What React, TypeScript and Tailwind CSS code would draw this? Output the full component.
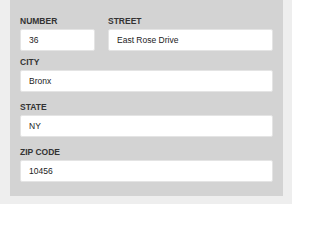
import React from "react";

interface FieldProps {
  label: string;
  value: string;
  className?: string;
}

function Field({ label, value, className = "" }: FieldProps) {
  return (
    <div className={`flex flex-col ${className}`}>
      <label className="text-[8.5px] font-bold uppercase leading-[11px] text-[#333333] mb-[2px]">
        {label}
      </label>
      <input
        readOnly
        value={value}
        className="h-[22px] w-full bg-white border border-[#e4e4e4] rounded-[2px] px-[8px] text-[8.5px] text-[#222222] outline-none"
      />
    </div>
  );
}

export default function App() {
  return (
    <div
      className="w-[292px] h-[204px] bg-[#eeeeee] pl-[10px] pr-[9px] pb-[8px]"
      style={{ fontFamily: '"Liberation Sans", Arial, sans-serif' }}
    >
      <div className="h-full bg-[#d3d3d3] px-[10px] pt-[16px] pb-[14px]">
        {/* Number + street share one row */}
        <div className="flex gap-[13px]">
          <Field label="Number" value="36" className="w-[75px] shrink-0" />
          <Field label="Street" value="East Rose Drive" className="flex-1" />
        </div>
        <Field label="City" value="Bronx" className="mt-[6px]" />
        <Field label="State" value="NY" className="mt-[10px]" />
        <Field label="Zip Code" value="10456" className="mt-[10px]" />
      </div>
    </div>
  );
}
